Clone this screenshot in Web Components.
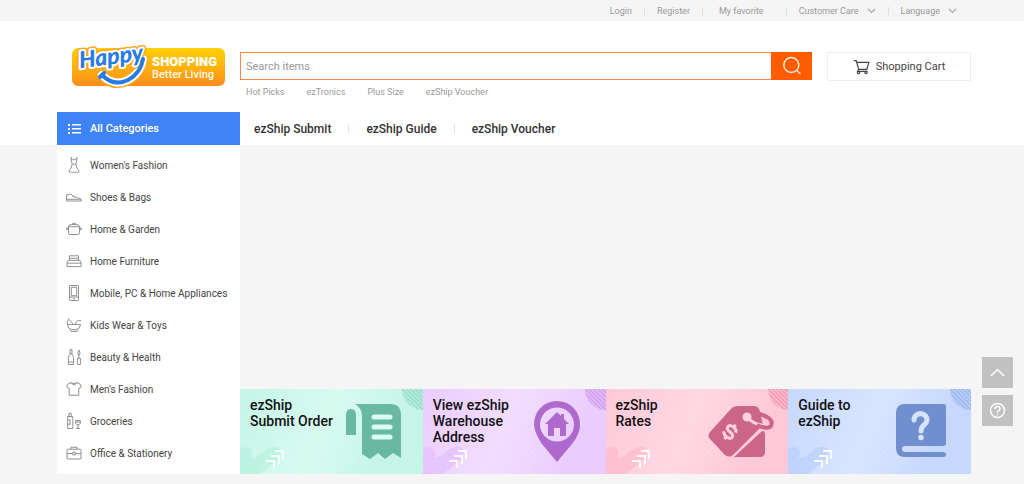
<!DOCTYPE html>
<html lang="en">
<head>
<meta charset="utf-8">
<title>Happy Shopping</title>
<style>
body{margin:0;background:#f5f5f5;font-family:Roboto,"Noto Sans",sans-serif;font-size:10px;color:#444}
</style>
</head>
<body>
<shop-page></shop-page>
<script>
const define = (name, html) => customElements.define(name, class extends HTMLElement {
  connectedCallback() {
    if (this.shadowRoot) return;
    const root = this.attachShadow({mode: 'open'});
    root.innerHTML = '<style>*{box-sizing:border-box}a{color:inherit;text-decoration:none}svg{display:block;flex:none}button{font:inherit;padding:0;border:0;cursor:pointer}</style>'
      + (typeof html === 'function' ? html(this) : html);
  }
});

/* Small outline icons of the category list, drawn on an 18 x 18 grid */
const icons = {
  dress: '<path d="M6.2 1v3.2M11.8 1v3.2M6.2 2.5Q9 5.5 11.8 2.5M6.2 4L7.2 8.2h3.6L11.8 4M7.2 8.2Q6.4 12.5 3.8 15.4q1.3 1.6 2.6.6q1.3 1.3 2.6 0q1.3 1.3 2.6 0q1.3 1 2.6-.6Q11.6 12.5 10.8 8.2"/>',
  shoe: '<path d="M1.6 6.5Q3 7.6 4.6 6.3L6 6.2Q8 9 11.5 9.5q4.5.4 4.8 2.6v.9H1.6zM1.6 11.3h14.6M7.4 8.6l1-.9M9.2 9.5l1-.9"/>',
  pot: '<path d="M3.5 6.7h11v6q0 1.8-1.8 1.8H5.3q-1.8 0-1.8-1.8zM3.5 8H1.6V9.5h1.9M14.5 8h1.9v1.5h-1.9M3.3 6.7Q4 4.6 6 4.6h6q2 0 2.7 2.1M7.7 4.5v-1.2h2.6v1.2"/>',
  bed: '<path d="M4.5 8.3v-4.5h9v4.5M4.5 6.3h9M3.2 8.4h11.6l1.3 2.2v4H2v-4zM2 11.2h14"/>',
  phone: '<rect x="4.5" y="1.5" width="9" height="15" rx=".6"/><path d="M6.3 3.3h5.4v8.4H6.3zM4.5 13h9M8 14.8h2"/>',
  pram: '<path d="M2.3 8.4h13.2q-.4 4.6-4.2 5.2H6.7Q2.7 13 2.3 8.4zM2.3 8.4Q1.4 5 4 3.4L8.4 8.4M4 3.4l-1-.8M10.2 8.4q.6-3.6 3.1-3.8h3M6 13.6l-1 1.8M12 13.6l1 1.8M6 15.5h6"/>',
  beauty: '<path d="M5 1.7h2v4.5l1.6 3.1v7.2H3.4V9.3L5 6.2zM5 5.8h2M3.4 14h5.2M12.4 10.3h3v6.2h-3zM13.9 10.3V6.8M13 6.6Q12.4 4 14 2q1.4 2 .8 4.6z"/>',
  shirt: '<path d="M6.2 2.7Q9 4.8 11.8 2.7l3 1.1 1.7 3-2.7 1.5v7H4.2v-7L1.5 6.8l1.7-3zM6.2 2.7Q9 7.2 11.8 2.7"/>',
  drink: '<path d="M4 1.2h2.2v3.3H4zM2.7 4.5h5.1v12H2.7zM2.7 8h2.4v4.3H2.7M10.6 8.5h4.8v2.3q-.3 2.2-2.4 2.2t-2.4-2.2zM10.6 10h4.8M13 13v3.5M11.2 16.5h3.6"/>',
  bag: '<rect x="2" y="5.2" width="14" height="9.8" rx="1"/><path d="M6 5V3.3h6V5M2 9.5h5.5M10.5 9.5H16"/><rect x="7.7" y="8.3" width="2.6" height="2.6"/>'
};

const chevron = '<svg width="9" height="6" viewBox="0 0 9 6" fill="none" stroke="#aaa" stroke-width="1.2"><path d="M1 1l3.5 3.5L8 1"/></svg>';

define('shop-topbar', `
<style>
:host{display:block;background:#f5f5f5;color:#999}
nav{display:flex;justify-content:flex-end;align-items:center;height:21px;padding:0 67px 0 57px;font-size:9px;line-height:12px}
a,button{display:flex;align-items:center;gap:8px;color:inherit;background:none}
i{width:1px;height:8px;background:#ddd;margin:0 12px}
.fav{margin:0 10px 0 4px}
</style>
<nav aria-label="Account"><a href="#">Login</a><i></i><a href="#">Register</a><i></i><a class="fav" href="#">My favorite</a><i></i><button>Customer Care ${chevron}</button><i></i><button>Language ${chevron}</button></nav>`);

define('shop-logo', `
<style>:host{display:block;width:156px}svg{overflow:visible}</style>
<a href="#" aria-label="Happy Shopping Better Living"><svg width="156" height="60" viewBox="0 -6 156 60">
<defs><linearGradient id="g" x2="0" y2="1"><stop stop-color="#ffcf08"/><stop offset=".45" stop-color="#ffb60d"/><stop offset="1" stop-color="#ff8b1d"/></linearGradient></defs>
<rect x="1" y="7" width="153" height="38" rx="6" fill="url(#g)"/>
<g fill="none" stroke-linecap="round" stroke-linejoin="round">
<path d="M31 34Q43 46 57 39 70 32 72 18" stroke="#ffa51c" stroke-width="11"/>
<path d="M31 34Q43 46 57 39 70 32 72 18" stroke="#fff" stroke-width="8"/>
</g>
<g transform="rotate(-7 10 28)" font-family="Lato,sans-serif" font-weight="900" font-style="italic" font-size="23">
<text x="9" y="27" fill="#287be5" stroke="#ffa51c" stroke-width="7" stroke-linejoin="round" paint-order="stroke" aria-hidden="true">Happy</text>
<text x="9" y="27" fill="#287be5" stroke="#fff" stroke-width="4" stroke-linejoin="round" paint-order="stroke">Happy</text>
</g>
<path d="M31 34Q43 46 57 39 70 32 72 18M29 36l4-4" fill="none" stroke="#287be5" stroke-width="4" stroke-linecap="round"/>
<text x="81" y="25" font-family="Roboto,sans-serif" font-weight="900" font-size="13" fill="#fff">SHOPPING</text>
<text x="81" y="37" font-family="Roboto,sans-serif" font-weight="500" font-size="11" fill="#fffbe6">Better Living</text>
</svg></a>`);

define('shop-search', `
<style>
:host{display:block}
form{display:flex;height:28px}
input{flex:1;min-width:0;border:1px solid #ff8548;border-right:0;padding:0 5px;font:11px Roboto,sans-serif;color:#444;background:#fff;outline:0;border-radius:0}
input::placeholder{color:#999;opacity:1}
button{width:41px;background:#ff5c00;display:grid;place-items:center}
nav{display:flex;gap:22px;margin-top:6px;padding-left:6px;font-size:9px;line-height:12px;color:#999}
</style>
<form role="search" onsubmit="return false"><input type="search" aria-label="Search items" placeholder="Search items"><button aria-label="Search"><svg width="20" height="20" viewBox="0 0 20 20" fill="none" stroke="#ffe9dc" stroke-width="1.5"><circle cx="9.3" cy="9" r="7.5"/><path d="M14.5 14.2l4 3.6"/></svg></button></form>
<nav aria-label="Popular searches"><a href="#">Hot Picks</a><a href="#">ezTronics</a><a href="#">Plus Size</a><a href="#">ezShip Voucher</a></nav>`);

define('shop-cart', `
<style>
:host{display:block;width:144px}
a{display:flex;align-items:center;justify-content:center;gap:6px;height:29px;border:1px solid #eee;font-size:11px;color:#444}
</style>
<a href="#"><svg width="17" height="16" viewBox="0 0 17 16" fill="none" stroke="#444" stroke-width="1.2"><path d="M.8 1.600h2.400l2.500 8.700h8.100l2-6.900H3.800M5.800 10.200l-1.200 2.100h9.700"/><circle cx="5.600" cy="13.500" r="1.200"/><circle cx="13" cy="13.500" r="1.200"/></svg>Shopping Cart</a>`);

define('shop-nav', `
<style>
:host{display:block}
nav{display:flex;align-items:center;height:33px;padding-left:14px;font-size:12px;font-weight:500;color:#333}
i{width:1px;height:9px;background:#e2e2e2;margin:0 17px}
</style>
<nav aria-label="Main"><a href="#">ezShip Submit</a><i></i><a href="#">ezShip Guide</a><i></i><a href="#">ezShip Voucher</a></nav>`);

define('shop-category-title', `
<style>
:host{display:block}
button{display:flex;align-items:center;width:100%;height:33px;padding-left:11px;gap:9px;background:#3f83f8;color:#fff;font-size:11px;font-weight:500}
</style>
<button><svg width="13" height="10" viewBox="0 0 13 10" fill="#fff"><path d="M0 0h2v2H0zM0 4h2v2H0zM0 8h2v2H0zM4 0h9v1.600H4zM4 4h9v1.600H4zM4 8h9v1.600H4z"/></svg><slot></slot></button>`);

define('shop-category', el => `
<style>
:host{display:block}
a{display:flex;align-items:center;gap:7px;height:32px;padding-left:8px;white-space:nowrap}
</style>
<a href="#"><svg width="18" height="18" viewBox="0 0 18 18" fill="none" stroke="#858585" stroke-width=".9" stroke-linejoin="round">${icons[el.getAttribute('icon')]}</svg><slot></slot></a>`);

/* Promotional tiles: each theme has its colours and its large symbol */
const themes = {
  green: {a:'#d8faf0', b:'#c4f5e7', c:'#a5ead5', d:'#68b9a0', art: `
    <path d="M106 46V26q0-6 5-6t5 6v20z"/><path d="M115 15h35q11 0 11 11v43l-8-5-8 6-7-6-8 6-8-5V27q0-8-7-12z"/>
    <path d="M134 28h16M134 38h16M134 48h16" fill="none" stroke="#d8fcf1" stroke-width="5" stroke-linecap="round"/>`},
  purple: {a:'#f1ddff', b:'#ebccff', c:'#dcaefa', d:'#ad69cb', art: `
    <path fill-rule="evenodd" d="M134 12a23 23 0 0 0-23 24q1 9 8 19l15 18 15-18q8-10 8-19a23 23 0 0 0-23-24zm0 6.500a17 17 0 1 1 0 34 17 17 0 0 1 0-34"/>
    <path d="M134 23l-12 12h3v11q0 1 1 1h5v-8h6v8h5q1 0 1-1V35h3l-5-5v-5h-3v2z"/>`},
  pink: {a:'#ffd8e3', b:'#ffc8d8', c:'#ffabc1', d:'#cc6688', art: `
    <path d="M132 17h16q5 0 6 6l3 13-30 30q-4 3-8 0l-15-16q-3-3 0-7l20-22q3-4 8-4z"/><path d="M128 68l27-25q4-3 4 3v17q0 5-5 5z"/>
    <circle cx="141" cy="28" r="4.500" fill="#ffd0de"/>
    <path d="M141 28q6 7 15 8" fill="none" stroke="#ffd0de" stroke-width="3" stroke-linecap="round"/>
    <path d="M149 24q20 4 16 13-3 4-14-1" fill="none" stroke="#cc6688" stroke-width="4"/>
    <path transform="translate(124 43) rotate(38)" d="M5-3Q4-6 0-6-5-6-5-3T0 0 5 3 0 6Q-4 6-5 3M0-6v-3M0 6v3" fill="none" stroke="#ffd0de" stroke-width="3"/>`},
  blue: {a:'#d8e5ff', b:'#c6d8fe', c:'#a9c6f9', d:'#718fcf', art: `
    <path d="M117 15h39q2 0 2 2v37q0 3-3 3h-38q-3 0-3 3t3 3h38q3 0 3 2.500t-3 2.500h-38q-9 0-9-9V24q0-9 9-9z"/>
    <path d="M126 31a6.500 6 0 1 1 11 4q-4 3-4 7" fill="none" stroke="#d5e3ff" stroke-width="5" stroke-linecap="round"/><circle cx="133" cy="48.500" r="2.800" fill="#d5e3ff"/>`}
};

define('shop-promo', el => {
  const t = themes[el.getAttribute('theme')];
  return `
<style>
:host{display:block;flex:1;min-width:0}
a{display:grid;height:85px;overflow:hidden;background:linear-gradient(115deg,${t.b},${t.a} 45%,${t.b} 80%);color:#111;font-size:14px;font-weight:500;line-height:16px}
a>*{grid-area:1/1}
span{padding:8px 0 0 10px;white-space:pre-line;z-index:1}
</style>
<a href="#"><svg width="183" height="85" viewBox="0 0 183 85">
<defs><pattern id="s" width="3" height="3" patternUnits="userSpaceOnUse" patternTransform="rotate(-45)"><path d="M0 0h1.300v3H0z" fill="${t.d}" opacity=".4"/></pattern>
<pattern id="p" width="5" height="5" patternUnits="userSpaceOnUse" patternTransform="rotate(45)"><circle cx="2" cy="2" r=".8" fill="#fff" opacity=".3"/></pattern></defs>
<path d="M0 60q8-5 12 2 1 4-2 7 7 0 13-6 9-8 16-4 4 6-2 12L20 85H0z" fill="${t.c}" opacity=".4"/>
<path d="M60 85l45-36 18 18-20 18z" fill="url(#p)"/>
<circle cx="183" cy="0" r="21" fill="${t.c}" opacity=".5"/><circle cx="183" cy="0" r="21" fill="url(#s)"/>
<path d="M35 62h8v8M31 67h8v8M26 72h8v7" fill="none" stroke="#fff" stroke-width="2" opacity=".85"/>
<g fill="${t.d}">${t.art}</g></svg><span><slot></slot></span></a>`;
});

define('shop-tools', `
<style>
:host{position:fixed;right:11px;bottom:58px;display:grid;gap:7px}
button{width:31px;height:31px;background:#c1c1c1;display:grid;place-items:center}
</style>
<button aria-label="Back to top"><svg width="15" height="9" viewBox="0 0 15 9" fill="none" stroke="#fff" stroke-width="1.500"><path d="M1 8l6.500-6.500L14 8"/></svg></button>
<button aria-label="Help"><svg width="17" height="17" viewBox="0 0 17 17" fill="none" stroke="#fff" stroke-width="1.500"><circle cx="8.500" cy="8.500" r="7"/><path d="M6 7q0-2.500 2.500-2.500T11 6.800Q11 8 9.500 8.700 8.500 9.200 8.500 10.500M8.500 11.700v1.500"/></svg></button>`);

define('shop-page', `
<style>
:host{display:block}
header{background:#fff}
.row{display:grid;grid-template-columns:183px minmax(0,1fr);margin:0 53px 0 57px}
.brand{padding-top:31px;height:91px}
.find{display:flex;align-items:flex-start;gap:15px}
shop-search{flex:1}
shop-logo{margin:-17px 0 0 14px}
aside{background:#fff;padding:4px 0 5px}
main{display:flex;flex-direction:column;justify-content:flex-end}
.promos{display:flex}
footer{height:10px}
</style>
<shop-topbar></shop-topbar>
<header>
<div class="row brand"><shop-logo></shop-logo><div class="find"><shop-search></shop-search><shop-cart></shop-cart></div></div>
<div class="row"><shop-category-title>All Categories</shop-category-title><shop-nav></shop-nav></div>
</header>
<div class="row">
<aside>
<shop-category icon="dress">Women's Fashion</shop-category>
<shop-category icon="shoe">Shoes &amp; Bags</shop-category>
<shop-category icon="pot">Home &amp; Garden</shop-category>
<shop-category icon="bed">Home Furniture</shop-category>
<shop-category icon="phone">Mobile, PC &amp; Home Appliances</shop-category>
<shop-category icon="pram">Kids Wear &amp; Toys</shop-category>
<shop-category icon="beauty">Beauty &amp; Health</shop-category>
<shop-category icon="shirt">Men's Fashion</shop-category>
<shop-category icon="drink">Groceries</shop-category>
<shop-category icon="bag">Office &amp; Stationery</shop-category>
</aside>
<main><div class="promos">
<shop-promo theme="green">ezShip
Submit Order</shop-promo>
<shop-promo theme="purple">View ezShip
Warehouse
Address</shop-promo>
<shop-promo theme="pink">ezShip
Rates</shop-promo>
<shop-promo theme="blue">Guide to
ezShip</shop-promo>
</div></main>
</div>
<footer></footer>
<shop-tools></shop-tools>`);
</script>
</body>
</html>
